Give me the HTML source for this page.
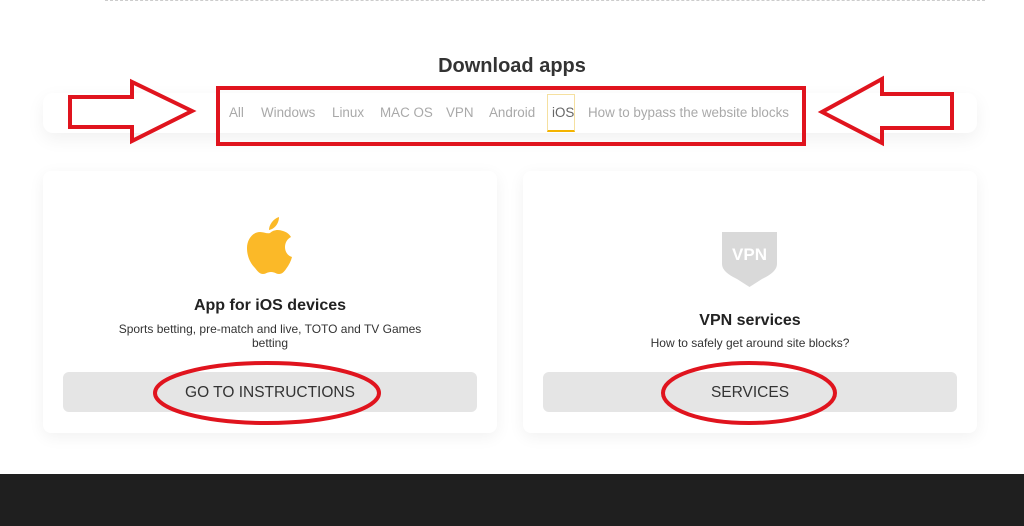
<!DOCTYPE html><html><head><style>
body{margin:0;width:1024px;height:526px;background:#fafafa;font-family:"Liberation Sans",sans-serif;position:relative;overflow:hidden}
.abs{position:absolute}
.bar{left:43px;top:93px;width:934px;height:40px;background:#fff;border-radius:10px;box-shadow:0 6px 18px rgba(0,0,0,.06)}
.tab{top:105px;font-size:13.4px;color:#a9a9a9}
.card{top:171px;width:454px;height:262px;background:#fff;border-radius:8px;box-shadow:0 4px 16px rgba(0,0,0,.06)}
.btn{top:372px;width:414px;height:40px;background:#e5e5e5;border-radius:6px;text-align:center;line-height:41px;font-size:15.5px;color:#333}
.t{text-align:center;color:#222}
</style></head><body>
<div class="abs" style="left:0;top:0;width:1024px;height:474px;background:#fff"></div>
<div class="abs" style="left:105px;top:0;width:880px;border-top:1px dashed #ccc"></div>
<div class="abs t" style="left:0;width:1024px;top:55px;font-size:20px;font-weight:bold;color:#333;padding-left:-2px">Download apps</div>
<div class="abs bar"></div>
<div class="abs tab" style="left:229px">All</div>
<div class="abs tab" style="left:261px">Windows</div>
<div class="abs tab" style="left:332px">Linux</div>
<div class="abs tab" style="left:380px">MAC OS</div>
<div class="abs tab" style="left:446px">VPN</div>
<div class="abs tab" style="left:489px">Android</div>
<div class="abs" style="left:547px;top:94px;width:28px;height:38px;border:1px solid #f5e0a0;border-bottom:2px solid #f4b400;box-sizing:border-box"></div>
<div class="abs tab" style="left:552px;color:#666">iOS</div>
<div class="abs tab" style="left:588px">How to bypass the website blocks</div>
<div class="abs card" style="left:43px"></div>
<div class="abs card" style="left:523px"></div>
<svg class="abs" style="left:247px;top:217px" width="46" height="57" viewBox="0 0 46 57"><path fill="#fbb928" d="M23 16c3-3 8-4 13-2 4 1 7 4 8 6-4 2-6 6-6 10 0 5 3 9 7 10-1 4-3 8-6 12-2 3-4 5-7 5-3 0-4-2-8-2s-5 2-8 2c-3 0-5-2-8-6C3 46 0 39 0 31c0-9 6-16 13-16 4 0 7 2 10 1zM22 13c0-5 4-11 10-13 0 6-4 12-10 13z"/></svg>
<div class="abs t" style="left:43px;width:454px;top:297px;font-size:16px;font-weight:bold">App for iOS devices</div>
<div class="abs t" style="left:103px;width:334px;top:322px;font-size:12px;line-height:14px;color:#333">Sports betting, pre-match and live, TOTO and TV Games betting</div>
<svg class="abs" style="left:722px;top:232px" width="56" height="56" viewBox="0 0 56 56"><path fill="#d9d9d9" d="M0 0H55V32Q55 40 40 47L27.5 55 15 47Q0 40 0 32Z"/><text x="27.5" y="28" text-anchor="middle" font-family="Liberation Sans" font-weight="bold" font-size="17" fill="#fff">VPN</text></svg>
<div class="abs t" style="left:523px;width:454px;top:312px;font-size:16px;font-weight:bold">VPN services</div>
<div class="abs t" style="left:523px;width:454px;top:336px;font-size:12px;color:#333">How to safely get around site blocks?</div>
<div class="abs btn" style="left:63px">GO TO INSTRUCTIONS</div>
<div class="abs btn" style="left:543px">SERVICES</div>
<div class="abs" style="left:0;top:474px;width:1024px;height:52px;background:#1f1f1f"></div>
<svg class="abs" style="left:0;top:0" width="1024" height="526">
<g fill="none" stroke="#e0141e" stroke-width="4">
<rect x="218" y="88" width="586" height="56"/>
<path d="M70 97H132V82L192 111 132 141V127H70Z"/>
<path d="M952 94H882V79L822 112 882 143V128H952Z"/>
<ellipse cx="267" cy="393" rx="112" ry="30"/>
<ellipse cx="749" cy="393" rx="86" ry="30"/>
</g></svg>
</body></html>
